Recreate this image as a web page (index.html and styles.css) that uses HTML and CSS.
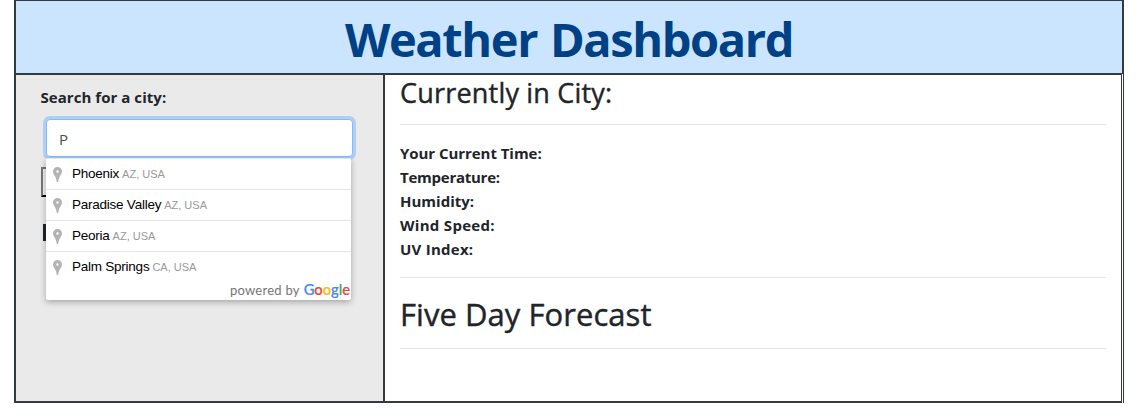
FILE: index.html
```html
<!DOCTYPE html>
<html lang="en">
<head>
<meta charset="utf-8">
<title>Weather Dashboard</title>
<link rel="stylesheet" href="styles.css">
</head>
<body>
<svg class="defs" width="0" height="0"><symbol id="pin" viewBox="0 0 9 15"><path fill="#b3b3b3" fill-rule="evenodd" d="M4.500 0A4.500 4.500 0 0 0 0 4.500C0 7.500 3 8.500 3.800 15h1.400C6 8.500 9 7.500 9 4.500A4.500 4.500 0 0 0 4.500 0ZM4.500 3.300a1.200 1.200 0 1 1 0 2.400a1.200 1.200 0 0 1 0-2.400Z"/></symbol></svg>
<div class="dashboard">
  <header class="banner"><h1 class="title">Weather Dashboard</h1></header>
  <div class="columns">
    <aside class="sidebar">
      <label class="search-label" for="city">Search for a city:</label>
      <input class="search-input" id="city" type="text" value="P">
      <div class="search-button"></div>
      <div class="history-mark"></div>
      <div class="suggestions">
        <div class="item"><svg class="pin"><use href="#pin"/></svg><span class="place">Phoenix</span><span class="region">AZ, USA</span></div>
        <div class="item"><svg class="pin"><use href="#pin"/></svg><span class="place">Paradise Valley</span><span class="region">AZ, USA</span></div>
        <div class="item"><svg class="pin"><use href="#pin"/></svg><span class="place">Peoria</span><span class="region">AZ, USA</span></div>
        <div class="item"><svg class="pin"><use href="#pin"/></svg><span class="place">Palm Springs</span><span class="region">CA, USA</span></div>
        <div class="credit"><span class="powered">powered by</span><span class="google"><span class="blue">G</span><span class="red">o</span><span class="yellow">o</span><span class="blue">g</span><span class="green">l</span><span class="red">e</span></span></div>
      </div>
    </aside>
    <main class="main">
      <h3 class="current">Currently in City:</h3>
      <hr class="rule">
      <div class="stats">
        <div class="time">Your Current Time:</div>
        <div class="temperature">Temperature:</div>
        <div>Humidity:</div>
        <div class="wind">Wind Speed:</div>
        <div class="uv">UV Index:</div>
      </div>
      <hr class="rule">
      <h2 class="forecast">Five Day Forecast</h2>
      <hr class="rule">
    </main>
  </div>
</div>
</body>
</html>
```
FILE: styles.css
```css
* { box-sizing: border-box; }
body { margin: 0; background: #fff; color: #212529; font: 16px/24px "Open Sans", "Noto Sans", sans-serif; }
.defs { position: absolute; }
.dashboard { width: 1110px; margin-left: 14px; }
.banner { height: 74px; background: #cce5ff; border: 2px solid #343a40; border-top-width: 1px; border-bottom-width: 1px; }
.title { margin: 0; padding-top: 9px; color: #004085; font-size: 47px; line-height: 58px; font-weight: 700; letter-spacing: -1.400px; word-spacing: 2px; text-align: center; white-space: nowrap; }
.columns { display: flex; height: 329px; border-right: 1px solid #343a40; padding-right: 1px; }
.sidebar { position: relative; width: 371px; flex: none; padding: 10px 0 0 24.500px; background: #eaeaea; border: 2px solid #343a40; border-top-width: 1px; }
.search-label { display: block; height: 34px; font-weight: 700; font-size: 15px; letter-spacing: .05px; }
.search-input { display: block; width: 307px; height: 38px; margin-left: 5.500px; padding: 2px 12px 0; border: 1px solid #80bdff; border-radius: 4px; outline: 0; box-shadow: 0 0 0 3px #b0cff2; color: #495057; font: 15px "Open Sans", sans-serif; background: #fff; }
.search-button { width: 80px; height: 30px; margin-top: 10px; border: 2px outset #767676; border-color: #767676 #212121 #212121 #767676; background: #efefef; }
.history-mark { width: 40px; height: 17px; margin: 27px 0 0 2px; background: #212529; }
.suggestions { position: absolute; left: 30px; top: 83px; width: 305px; height: 142px; background: #fff; border-radius: 2px; box-shadow: 0 2px 6px rgba(0,0,0,.3); font-family: "Liberation Sans", Arial, sans-serif; }
.item { display: flex; align-items: baseline; height: 31px; padding-left: 7px; border-top: 1px solid #e6e6e6; line-height: 30px; }
.pin { width: 9px; height: 15px; margin-right: 10px; align-self: flex-start; margin-top: 8px; }
.place { color: #000; font-size: 13.500px; letter-spacing: -.24px; margin-right: 3px; }
.region { color: #999; font-size: 11px; }
.credit { display: flex; justify-content: flex-end; align-items: baseline; gap: 4px; margin-top: -2px; padding-right: 1px; line-height: 18px; font-family: Lato, sans-serif; }
.powered { color: #757575; font-size: 13px; letter-spacing: .25px; }
.google { font-size: 14.700px; font-weight: 500; -webkit-text-stroke: .2px; }
.blue { color: #4285f4; } .red { color: #ea4335; } .yellow { color: #fbbc05; } .green { color: #34a853; }
.main { flex: 1; min-width: 0; padding: 2px 15px 0; border: solid #343a40; border-width: 1px 1px 2px 0; }
.current { margin: 0; font-size: 27px; line-height: 31px; padding-bottom: 3px; font-weight: 500; letter-spacing: .2px; -webkit-text-stroke: .4px; }
.rule { height: 1px; margin: 13px 0 16px; border: 0; background: #e5e5e5; }
.stats { font-weight: 700; font-size: 15px; padding-bottom: 3px; }
.time { letter-spacing: -.05px; }
.temperature { letter-spacing: -.25px; }
.wind { letter-spacing: .3px; }
.uv { letter-spacing: .25px; }
.forecast { margin: 0; padding: 1px 0; font-size: 31px; line-height: 39px; font-weight: 500; letter-spacing: .05px; -webkit-text-stroke: .4px; }
```
